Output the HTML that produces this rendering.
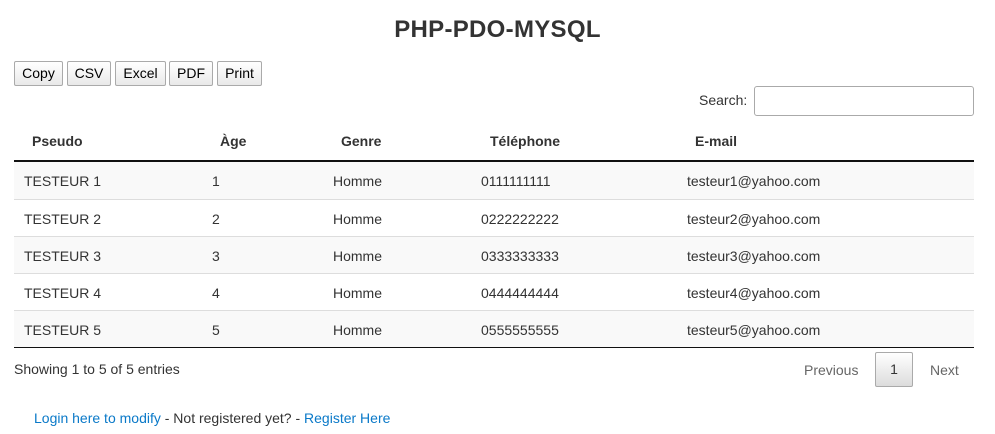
<!DOCTYPE html>
<html><head><meta charset="utf-8"><style>
*{margin:0;padding:0;box-sizing:border-box}
body{width:995px;height:434px;background:#fff;font-family:"Liberation Sans",Arial,sans-serif;font-size:14px;color:#333;position:relative;overflow:hidden}
.a{position:absolute;white-space:nowrap}
h1{position:absolute;left:0;width:995px;top:16px;text-align:center;font-size:24px;font-weight:bold;color:#333;letter-spacing:0.3px}
.btn{position:absolute;top:61px;height:25px;border:1px solid #aaa;background:linear-gradient(#fff,#e9e9e9);font-size:14px;color:#000;text-align:center;line-height:23px;border-radius:2px}
.row{position:absolute;left:14px;width:960px;height:37px;border-top:1px solid #ddd}
.row span{position:absolute;top:11px}
.hd span{position:absolute;top:133px;font-weight:bold}
a{color:#0a79c8;text-decoration:none}
</style></head><body>
<h1>PHP-PDO-MYSQL</h1>
<div class="btn" style="left:14px;width:49px">Copy</div>
<div class="btn" style="left:67px;width:44px">CSV</div>
<div class="btn" style="left:115px;width:51px">Excel</div>
<div class="btn" style="left:169px;width:44px">PDF</div>
<div class="btn" style="left:217px;width:45px">Print</div>
<div class="a" style="left:699px;top:92px">Search:</div>
<div class="a" style="left:754px;top:86px;width:220px;height:30px;border:1px solid #aaa;border-radius:3px"></div>
<div class="hd">
<span style="left:32px">Pseudo</span><span style="left:220px">Àge</span><span style="left:341px">Genre</span><span style="left:490px">Téléphone</span><span style="left:695px">E-mail</span>
</div>
<div class="a" style="left:14px;top:160px;width:960px;height:2px;background:#111"></div>
<div class="row" style="top:162px;background:#f9f9f9;border-top:none"><span style="left:10px">TESTEUR 1</span><span style="left:198px">1</span><span style="left:319px">Homme</span><span style="left:467px">0111111111</span><span style="left:673px">testeur1@yahoo.com</span></div>
<div class="row" style="top:199px"><span style="left:10px">TESTEUR 2</span><span style="left:198px">2</span><span style="left:319px">Homme</span><span style="left:467px">0222222222</span><span style="left:673px">testeur2@yahoo.com</span></div>
<div class="row" style="top:236px;background:#f9f9f9"><span style="left:10px">TESTEUR 3</span><span style="left:198px">3</span><span style="left:319px">Homme</span><span style="left:467px">0333333333</span><span style="left:673px">testeur3@yahoo.com</span></div>
<div class="row" style="top:273px"><span style="left:10px">TESTEUR 4</span><span style="left:198px">4</span><span style="left:319px">Homme</span><span style="left:467px">0444444444</span><span style="left:673px">testeur4@yahoo.com</span></div>
<div class="row" style="top:310px;background:#f9f9f9"><span style="left:10px">TESTEUR 5</span><span style="left:198px">5</span><span style="left:319px">Homme</span><span style="left:467px">0555555555</span><span style="left:673px">testeur5@yahoo.com</span></div>
<div class="a" style="left:14px;top:347px;width:960px;height:1px;background:#111"></div>
<div class="a" style="left:14px;top:361px">Showing 1 to 5 of 5 entries</div>
<div class="a" style="left:804px;top:362px;color:#666">Previous</div>
<div class="a" style="left:875px;top:352px;width:38px;height:35px;border:1px solid #aaa;border-radius:2px;background:linear-gradient(#fff,#dcdcdc);text-align:center;line-height:33px">1</div>
<div class="a" style="left:930px;top:362px;color:#666">Next</div>
<div class="a" style="left:34px;top:410px"><a>Login here to modify</a> - Not registered yet? - <a>Register Here</a></div>
</body></html>
